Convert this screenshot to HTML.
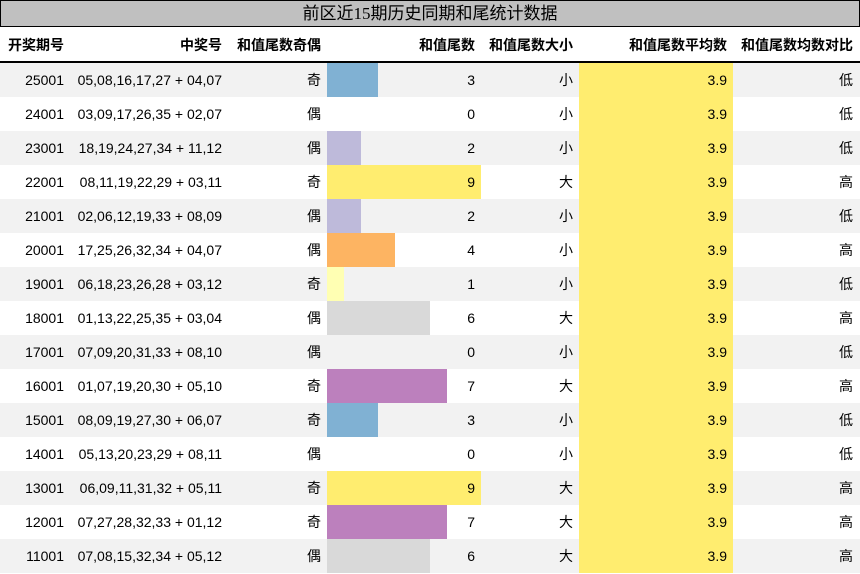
<!DOCTYPE html>
<html><head><meta charset="utf-8"><style>
*{margin:0;padding:0;box-sizing:border-box}
body{width:860px;height:574px;background:#fff;font-family:"Liberation Sans","Noto Sans CJK SC",sans-serif;font-size:14px;color:#000;position:relative;overflow:hidden}
#t{position:absolute;left:0;top:0;width:860px;height:27px;background:#c0c0c0;border:1px solid #000;text-align:center;font-family:"Liberation Serif","Noto Sans CJK SC",serif;font-size:17px;line-height:25px}
.h{position:absolute;top:27px;height:35px;line-height:37px;font-weight:bold}
#hl{position:absolute;left:0;top:61px;width:860px;height:2px;background:#000}
.r{position:absolute;left:0;width:860px;height:34px}
.r div{position:absolute;top:0;height:34px;line-height:34px}
.R{text-align:right}
</style></head><body>
<div id="t">前区近15期历史同期和尾统计数据</div>
<div class="h" style="left:8px">开奖期号</div>
<div class="h R" style="left:72px;width:150px">中奖号</div>
<div class="h R" style="left:228px;width:93px">和值尾数奇偶</div>
<div class="h R" style="left:327px;width:148px">和值尾数</div>
<div class="h R" style="left:481px;width:92px">和值尾数大小</div>
<div class="h R" style="left:579px;width:148px">和值尾数平均数</div>
<div class="h R" style="left:733px;width:120px">和值尾数均数对比</div>
<div id="hl"></div>
<div id="rows"></div>
<script>
var d=[["25001","05,08,16,17,27 + 04,07","奇",3,"小","低"],
["24001","03,09,17,26,35 + 02,07","偶",0,"小","低"],
["23001","18,19,24,27,34 + 11,12","偶",2,"小","低"],
["22001","08,11,19,22,29 + 03,11","奇",9,"大","高"],
["21001","02,06,12,19,33 + 08,09","偶",2,"小","低"],
["20001","17,25,26,32,34 + 04,07","偶",4,"小","高"],
["19001","06,18,23,26,28 + 03,12","奇",1,"小","低"],
["18001","01,13,22,25,35 + 03,04","偶",6,"大","高"],
["17001","07,09,20,31,33 + 08,10","偶",0,"小","低"],
["16001","01,07,19,20,30 + 05,10","奇",7,"大","高"],
["15001","08,09,19,27,30 + 06,07","奇",3,"小","低"],
["14001","05,13,20,23,29 + 08,11","偶",0,"小","低"],
["13001","06,09,11,31,32 + 05,11","奇",9,"大","高"],
["12001","07,27,28,32,33 + 01,12","奇",7,"大","高"],
["11001","07,08,15,32,34 + 05,12","偶",6,"大","高"]];
var c={1:"#ffffb3",2:"#bebada",3:"#80b1d3",4:"#fdb462",6:"#d9d9d9",7:"#bc80bd",9:"#ffed6f"};
var h="";
d.forEach(function(r,i){
var bg=i%2==0?"#f2f2f2":"#fff";
h+='<div class="r" style="top:'+(63+i*34)+'px;background:'+bg+'">'+
'<div class="R" style="left:0;width:64px">'+r[0]+'</div>'+
'<div class="R" style="left:72px;width:150px">'+r[1]+'</div>'+
'<div class="R" style="left:228px;width:93px">'+r[2]+'</div>'+
(r[3]?'<div style="left:327px;width:'+Math.round(r[3]*154/9)+'px;background:'+c[r[3]]+'"></div>':'')+
'<div class="R" style="left:327px;width:148px">'+r[3]+'</div>'+
'<div class="R" style="left:481px;width:92px">'+r[4]+'</div>'+
'<div class="R" style="left:579px;width:154px;background:#ffed6f;padding-right:6px">3.9</div>'+
'<div class="R" style="left:733px;width:120px">'+r[5]+'</div></div>';
});
document.getElementById("rows").innerHTML=h;
</script>
</body></html>
